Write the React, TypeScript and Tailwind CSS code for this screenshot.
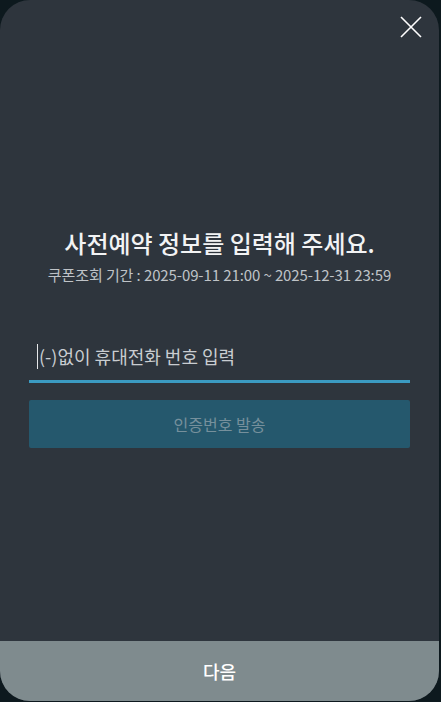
export default function App() {
  return (
    <div className="w-[441px] h-[702px] bg-[#0d191e] overflow-hidden" style={{ fontFamily: '"Noto Sans CJK KR", "Noto Sans", sans-serif' }}>
      <div className="relative w-[439px] h-[701px] bg-[#2e353d] rounded-[30px] overflow-hidden flex flex-col">
        <button className="absolute top-[16px] right-[17px] w-[22px] h-[22px]" aria-label="close">
          <svg width="22" height="22" viewBox="0 0 22 22" fill="none" stroke="#ffffff" strokeWidth="1.6">
            <path d="M1 1 L21 21 M21 1 L1 21" />
          </svg>
        </button>
        <div className="flex-1 flex flex-col px-[29px] pt-[226px]">
          <h1 className="text-center text-[24px] leading-[34px] font-medium text-[#f2f3f4]">사전예약 정보를 입력해 주세요.</h1>
          <p className="text-center text-[15px] leading-[22px] text-[#bfc3c7] mt-[4px] tracking-[-0.1px]">쿠폰조회 기간 : 2025-09-11 21:00 ~ 2025-12-31 23:59</p>
          <div className="mt-[50px] h-[47px] flex items-start pt-[8px] pl-[8px] border-b-[3px] border-[#3b9bc2]">
            <span className="w-px h-[25px] bg-[#e5e7e9] mr-[1px]" />
            <span className="text-[18px] leading-[25px] text-[#c9cdd1]">(-)없이 휴대전화 번호 입력</span>
          </div>
          <button className="mt-[17px] h-[48px] w-full bg-[#25586d] rounded-[2px] text-[16px] text-[#76909c] flex items-center justify-center">인증번호 발송</button>
        </div>
        <div className="h-[60px] bg-[#7f8b8e] flex items-center justify-center text-[18px] font-medium text-white">다음</div>
      </div>
    </div>
  );
}
